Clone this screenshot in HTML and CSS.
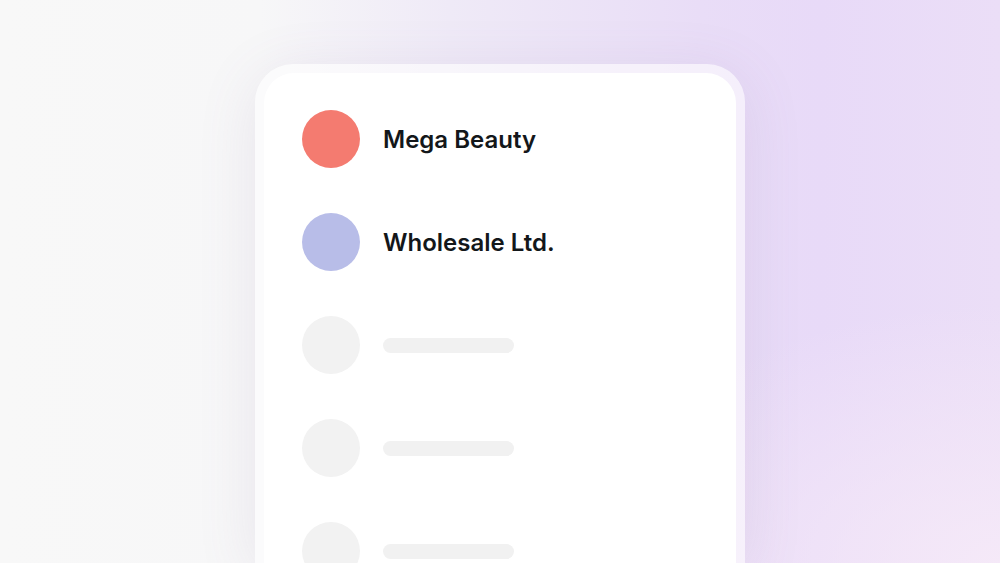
FILE: index.html
```html
<!DOCTYPE html>
<html lang="en">

<head>
    <meta charset="UTF-8">
    <meta name="viewport" content="width=device-width, initial-scale=1.0">
    <title>Customers</title>
    <link rel="stylesheet" href="styles.css">
</head>

<body>

    <div class="stage">
        <div class="frame">
            <div class="card">
                <div class="row">
                    <div class="dot dot-coral"></div>
                    <span class="name">Mega Beauty</span>
                </div>
                <div class="row">
                    <div class="dot dot-lilac"></div>
                    <span class="name">Wholesale Ltd.</span>
                </div>
                <div class="row">
                    <div class="dot dot-empty"></div>
                    <div class="bar"></div>
                </div>
                <div class="row">
                    <div class="dot dot-empty"></div>
                    <div class="bar"></div>
                </div>
                <div class="row">
                    <div class="dot dot-empty"></div>
                    <div class="bar"></div>
                </div>
            </div>
        </div>
    </div>

</body>

</html>
```

FILE: styles.css
```css
body {
    margin: 0;
    padding: 0;
    font-family: Inter, "Noto Sans", sans-serif;
    overflow: hidden;
}

/* Background */
.stage {
    height: 563px;
    box-sizing: border-box;
    padding-top: 64px;
    display: flex;
    justify-content: center;
    overflow: hidden;
    background:
        radial-gradient(ellipse 420px 260px at 1000px 563px, rgba(246, 234, 248, 0.9), rgba(246, 234, 248, 0)),
        linear-gradient(90deg, #f8f8f8 0%, #f7f7f8 26%, #efeaf7 45%, #e9ddf7 70%, #e8daf8 82%, #ebdef7 100%);
}

/* Card */
.frame {
    width: 490px;
    box-sizing: border-box;
    padding: 9px 9px 0 9px;
    border-radius: 38px 38px 0 0;
    background: rgba(255, 255, 255, 0.55);
    box-shadow: 0 10px 60px rgba(120, 100, 150, 0.12);
}

.card {
    height: 100%;
    box-sizing: border-box;
    padding: 37px 38px 0 38px;
    border-radius: 30px 30px 0 0;
    background: #fff;
    display: flex;
    flex-direction: column;
    gap: 45px;
    overflow: hidden;
}

.row {
    display: flex;
    align-items: center;
    gap: 23px;
    flex-shrink: 0;
}

.dot {
    width: 58px;
    height: 58px;
    border-radius: 50%;
    flex-shrink: 0;
}

.dot-coral {
    background-color: #f47b70;
}

.dot-lilac {
    background-color: #b8bde8;
}

.dot-empty {
    background-color: #f2f2f2;
}

.name {
    font-size: 24px;
    font-weight: 600;
    color: #13171a;
    letter-spacing: 0;
}

.bar {
    width: 131px;
    height: 15px;
    border-radius: 8px;
    background-color: #f1f1f1;
}
```
